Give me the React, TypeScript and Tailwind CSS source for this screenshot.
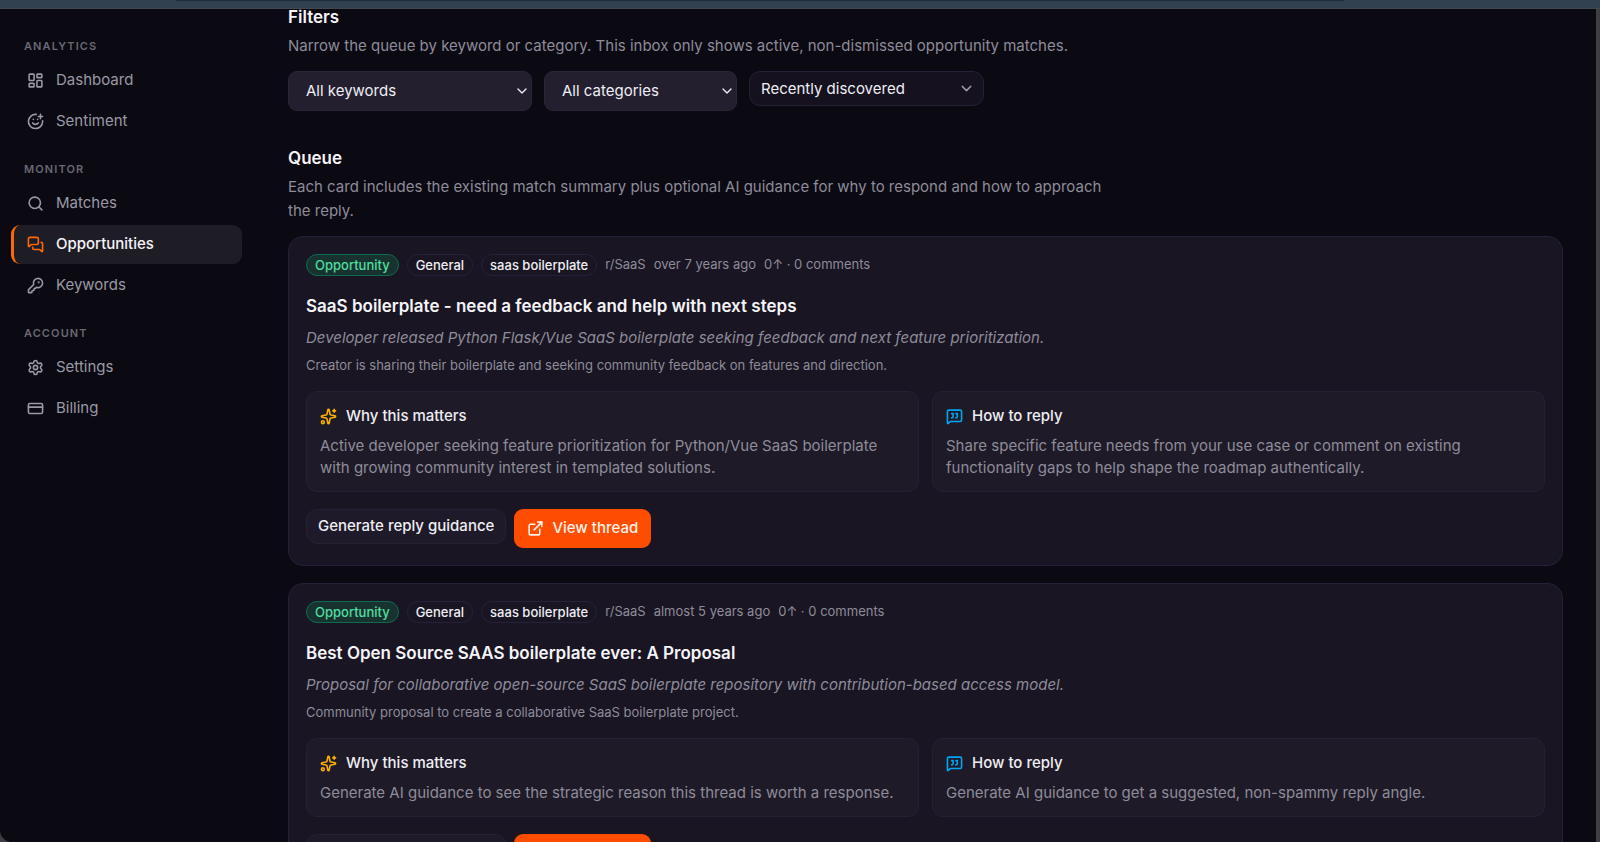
import { useState } from 'react'
import {
  ChevronDown,
  CreditCard,
  ExternalLink,
  KeyRound,
  LayoutDashboard,
  MessageSquareQuote,
  MessagesSquare,
  Search,
  Settings,
  SmilePlus,
  Sparkles,
  type LucideIcon,
} from 'lucide-react'

interface NavItem {
  label: string
  icon: LucideIcon
}

interface Opportunity {
  id: number
  category: string
  keyword: string
  subreddit: string
  age: string
  score: number
  comments: number
  title: string
  summary: string
  detail: string
  why: string
  how: string
}

const navGroups: { title: string; items: NavItem[] }[] = [
  {
    title: 'Analytics',
    items: [
      { label: 'Dashboard', icon: LayoutDashboard },
      { label: 'Sentiment', icon: SmilePlus },
    ],
  },
  {
    title: 'Monitor',
    items: [
      { label: 'Matches', icon: Search },
      { label: 'Opportunities', icon: MessagesSquare },
      { label: 'Keywords', icon: KeyRound },
    ],
  },
  {
    title: 'Account',
    items: [
      { label: 'Settings', icon: Settings },
      { label: 'Billing', icon: CreditCard },
    ],
  },
]

const opportunities: Opportunity[] = [
  {
    id: 1,
    category: 'General',
    keyword: 'saas boilerplate',
    subreddit: 'r/SaaS',
    age: 'over 7 years ago',
    score: 0,
    comments: 0,
    title: 'SaaS boilerplate - need a feedback and help with next steps',
    summary: 'Developer released Python Flask/Vue SaaS boilerplate seeking feedback and next feature prioritization.',
    detail: 'Creator is sharing their boilerplate and seeking community feedback on features and direction.',
    why: 'Active developer seeking feature prioritization for Python/Vue SaaS boilerplate with growing community interest in templated solutions.',
    how: 'Share specific feature needs from your use case or comment on existing functionality gaps to help shape the roadmap authentically.',
  },
  {
    id: 2,
    category: 'General',
    keyword: 'saas boilerplate',
    subreddit: 'r/SaaS',
    age: 'almost 5 years ago',
    score: 0,
    comments: 0,
    title: 'Best Open Source SAAS boilerplate ever: A Proposal',
    summary: 'Proposal for collaborative open-source SaaS boilerplate repository with contribution-based access model.',
    detail: 'Community proposal to create a collaborative SaaS boilerplate project.',
    why: 'Generate AI guidance to see the strategic reason this thread is worth a response.',
    how: 'Generate AI guidance to get a suggested, non-spammy reply angle.',
  },
]

function Sidebar() {
  const [active, setActive] = useState('Opportunities')

  return (
    <nav className="w-[252px] shrink-0 pl-[11px] pr-[10px] pt-[29px] space-y-5">
      {navGroups.map(group => (
        <div key={group.title}>
          <h2 className="pl-[13px] mb-[7px] text-[11px] leading-4 font-semibold uppercase tracking-widest text-[#696873]">
            {group.title}
          </h2>
          <ul className="space-y-[2px]">
            {group.items.map(({ label, icon: Icon }) => {
              const isActive = label === active
              return (
                <li key={label}>
                  <a
                    href={`#${label.toLowerCase()}`}
                    onClick={() => setActive(label)}
                    className={`flex h-[39px] items-center gap-3 rounded-[9px] border-l-[3px] pl-[13px] text-[15px] ${
                      isActive
                        ? 'border-[#ff6900] bg-[#1e1d26] font-medium text-[#f5f4f8]'
                        : 'border-transparent text-[#9a99a5]'
                    }`}
                  >
                    <Icon strokeWidth={2.25} className={isActive ? 'size-[17px] text-[#ff6900]' : 'size-[17px]'} />
                    {label}
                  </a>
                </li>
              )
            })}
          </ul>
        </div>
      ))}
    </nav>
  )
}

function Filters() {
  return (
    <section>
      <h2 className="text-[17px] leading-4 font-semibold text-[#f5f4f8]">Filters</h2>
      <p className="mt-[9px] text-[15px] leading-6 text-[#8e8c9a]">
        Narrow the queue by keyword or category. This inbox only shows active, non-dismissed opportunity matches.
      </p>
      <div className="mt-[13px] flex items-start gap-3">
        <div className="relative w-[244px]">
          <select
            aria-label="Keyword"
            className="h-10 w-full appearance-none rounded-[9px] border border-[#2a2637] bg-[#231f2e] px-[17px] pt-px text-[15px] text-[#efeef4]"
          >
            <option>All keywords</option>
          </select>
          <ChevronDown className="pointer-events-none absolute right-[2px] top-3 size-4 text-[#efeef4]" />
        </div>
        <div className="relative w-[193px]">
          <select
            aria-label="Category"
            className="h-10 w-full appearance-none rounded-[9px] border border-[#2a2637] bg-[#231f2e] px-[17px] pt-px text-[15px] text-[#efeef4]"
          >
            <option>All categories</option>
          </select>
          <ChevronDown className="pointer-events-none absolute right-[2px] top-3 size-4 text-[#efeef4]" />
        </div>
        <div className="relative w-[235px]">
          <select
            aria-label="Sort order"
            className="h-[35px] w-full appearance-none rounded-[11px] border border-[#252137] bg-[#15111f] px-[11px] pt-px text-[15px] text-[#efeef4]"
          >
            <option>Recently discovered</option>
          </select>
          <ChevronDown className="pointer-events-none absolute right-[9px] top-[9px] size-[17px] text-[#9a99a5]" />
        </div>
      </div>
    </section>
  )
}

function GuidanceBox({ icon: Icon, color, title, text }: { icon: LucideIcon; color: string; title: string; text: string }) {
  return (
    <div className="rounded-[11px] border border-[#252135] bg-[#1e1a27] px-[13px] pt-[14px] pb-3">
      <h4 className="flex items-center gap-[9px] text-[15px] leading-5 font-medium text-[#efeef4]">
        <Icon strokeWidth={2.25} className={`size-[17px] ${color}`} />
        {title}
      </h4>
      <p className="mt-[9px] text-[15px] leading-[22px] text-[#8e8c9a]">{text}</p>
    </div>
  )
}

function OpportunityCard({ item }: { item: Opportunity }) {
  return (
    <article className="rounded-[15px] border border-[#25213a] bg-[#191522] p-[17px]">
      <div className="flex items-center gap-2 text-[13px] text-[#8e8c9a]">
        <span className="h-[22px] rounded-full border border-[#0f6b50] bg-[#18332f] px-2 leading-5 font-medium text-[#4fdfa0]">
          Opportunity
        </span>
        <span className="h-[22px] rounded-full border border-[#25213a] px-2 leading-5 font-medium text-[#efeef4]">
          {item.category}
        </span>
        <span className="h-[22px] rounded-full border border-[#25213a] px-2 leading-5 font-medium text-[#efeef4]">
          {item.keyword}
        </span>
        <span>{item.subreddit}</span>
        <span>{item.age}</span>
        <span>
          {item.score}↑ · {item.comments} comments
        </span>
      </div>

      <h3 className="mt-[18px] text-[17px] leading-6 font-semibold text-[#f5f4f8]">{item.title}</h3>
      <p className="mt-2 text-[15px] leading-6 italic text-[#8e8c9a]">{item.summary}</p>
      <p className="mt-[5px] text-[13px] leading-5 text-[#8e8c9a]">{item.detail}</p>

      <div className="mt-4 grid grid-cols-2 gap-[13px]">
        <GuidanceBox icon={Sparkles} color="text-[#fdb000]" title="Why this matters" text={item.why} />
        <GuidanceBox icon={MessageSquareQuote} color="text-[#00a6f4]" title="How to reply" text={item.how} />
      </div>

      <div className="mt-[17px] flex items-start gap-2">
        <button className="h-[35px] rounded-[11px] border border-[#252135] bg-[#1e1a29] px-[11px] text-[15px] font-medium text-[#efeef4]">
          Generate reply guidance
        </button>
        <a
          href="#thread"
          className="flex h-[39px] items-center gap-2 rounded-[9px] bg-[#ff4d00] px-[13px] text-[15px] font-medium text-[#fff1ec]"
        >
          <ExternalLink strokeWidth={2.25} className="size-[17px]" />
          View thread
        </a>
      </div>
    </article>
  )
}

export default function App() {
  return (
    <div className="flex h-screen flex-col overflow-hidden bg-[#3c3e42] font-['Inter',sans-serif]">
      {/* Strip of the browser chrome above the page */}
      <div className="h-[9px] shrink-0 border-b border-[#41484f] bg-[#32414f]">
        <div className="ml-[11%] mr-[16%] h-px bg-[#1e2d3b]" />
      </div>
      <div className="mr-[3px] flex min-h-0 flex-1 overflow-hidden rounded-bl-xl border-r border-[#434343] bg-[#0b0912]">
        <Sidebar />
        <main className="min-w-0 flex-1 pl-[36px] pr-[33px]">
          <Filters />
          <section className="mt-[39px]">
            <h2 className="text-[17px] leading-4 font-semibold text-[#f5f4f8]">Queue</h2>
            <p className="mt-[9px] max-w-[830px] text-[15px] leading-6 text-[#8e8c9a]">
              Each card includes the existing match summary plus optional AI guidance for why to respond and how to approach
              the reply.
            </p>
            <div className="mt-[13px] space-y-[17px]">
              {opportunities.map(item => (
                <OpportunityCard key={item.id} item={item} />
              ))}
            </div>
          </section>
        </main>
      </div>
    </div>
  )
}
